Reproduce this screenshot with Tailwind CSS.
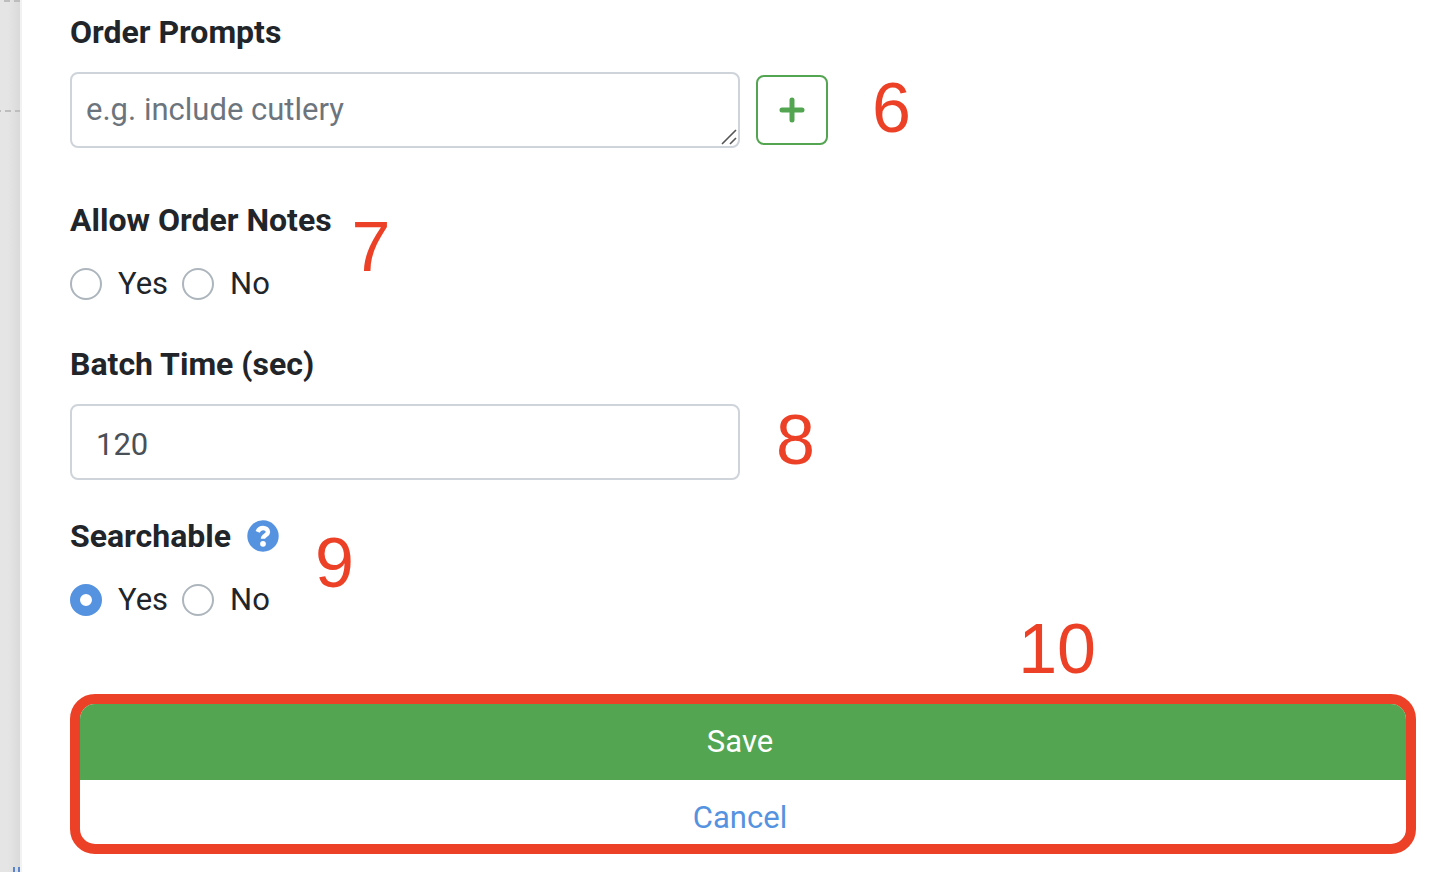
<!DOCTYPE html>
<html lang="en">
<head>
    <meta charset="UTF-8">
    <meta name="viewport" content="width=device-width, initial-scale=1.0">
    <title>Order Settings</title>
    <script src="https://cdn.jsdelivr.net/npm/@tailwindcss/browser@4"></script>
</head>
<body class="flex min-h-screen bg-white font-[Roboto,sans-serif] text-[31px] leading-[48px] text-[#212529]">
    <!-- Page behind the panel -->
    <aside class="relative w-[22px] shrink-0 overflow-hidden border-r-2 border-[#f2f2f2] bg-linear-to-r from-[#e5e5e5] from-40% to-[#dadada]">
        <svg class="absolute left-0 top-0 h-28 w-5" viewBox="0 0 20 112" fill="none" stroke="#bdbdbd" stroke-width="2" aria-hidden="true">
            <path d="M4 1h6M14 1h6M0 111h1M5 111h6M15 111h5"/>
        </svg>
        <svg class="absolute bottom-0 left-0 h-[5px] w-5" viewBox="0 0 20 5" aria-hidden="true">
            <path d="M13 0h2v5h-2zM18 0h2v5h-2z" fill="#5b84cf"/>
        </svg>
    </aside>

    <main class="min-w-0 flex-1 pt-2">
        <form class="pr-8 pl-12">
            <!-- Order prompts -->
            <div class="mb-12">
                <label class="mb-4 block w-fit text-[32px] font-bold" for="prompts">Order Prompts</label>
                <div class="flex items-center gap-4">
                    <div class="relative w-[670px]">
                        <textarea id="prompts" rows="1" placeholder="e.g. include cutlery" class="block h-[76px] w-full resize-none overflow-hidden rounded-lg border-2 border-[#ced4da] px-[14px] py-3 placeholder:text-[#6c757d]"></textarea>
                        <svg class="pointer-events-none absolute right-[3px] bottom-[3px] size-4" viewBox="0 0 16 16" fill="none" stroke="#555" stroke-width="1.6" aria-hidden="true">
                            <path d="M1 15L15 1M9 15L15 9"/>
                        </svg>
                    </div>
                    <button type="button" aria-label="Add prompt" class="flex h-[70px] w-[72px] shrink-0 items-center justify-center rounded-lg border-2 border-[#53a551] text-[#53a551]">
                        <svg class="size-7" viewBox="0 0 28 28" fill="none" stroke="currentColor" aria-hidden="true">
                            <path d="M14 4v20M4 14h20" stroke-width="5" stroke-linecap="round"/>
                            <path d="M14 2.5v23M2.5 14h23" stroke-width="4"/>
                        </svg>
                    </button>
                    <span class="ml-7 pb-1 font-['Liberation_Sans',sans-serif] text-[70px] leading-[70px] text-[#ec4126]">6</span>
                </div>
            </div>

            <!-- Order notes -->
            <fieldset class="relative mb-8 w-fit">
                <legend class="mb-4 text-[32px] font-bold">Allow Order Notes</legend>
                <div class="flex items-center gap-[14px]">
                    <label class="flex items-center gap-4">
                        <input type="radio" name="notes" class="size-8 appearance-none rounded-full border-2 border-[#adb5bd] checked:border-[10px] checked:border-[#5592df]">
                        Yes
                    </label>
                    <label class="flex items-center gap-4">
                        <input type="radio" name="notes" class="size-8 appearance-none rounded-full border-2 border-[#adb5bd] checked:border-[10px] checked:border-[#5592df]">
                        No
                    </label>
                </div>
                <span class="absolute -top-12 left-full ml-5 font-['Liberation_Sans',sans-serif] text-[70px] leading-[70px] text-[#ec4126]">7</span>
            </fieldset>

            <!-- Batch time -->
            <div class="mb-8">
                <label class="mb-4 block w-fit text-[32px] font-bold" for="batch">Batch Time (sec)</label>
                <div class="flex items-center gap-9">
                    <input id="batch" type="text" value="120" class="h-[76px] w-[670px] min-w-0 rounded-lg border-2 border-[#ced4da] px-6 pt-1 text-[#495057]">
                    <span class="pb-1 font-['Liberation_Sans',sans-serif] text-[70px] leading-[70px] text-[#ec4126]">8</span>
                </div>
            </div>

            <!-- Searchable -->
            <fieldset class="relative mb-[70px] w-fit">
                <legend class="mb-4 flex items-center gap-4 text-[32px] font-bold">
                    Searchable
                    <svg class="size-8" viewBox="0 0 32 32" fill="none" role="img" aria-label="Help">
                        <circle cx="16" cy="16" r="15.7" fill="#5592df"/>
                        <path d="M10.6 11.8C11.8 9.2 13.5 8 16 8C18.8 8 21 9.5 21 12C21 15.2 16 15.3 16 18.8" stroke="#fff" stroke-width="4.4"/>
                        <circle cx="16" cy="23.8" r="2.9" fill="#fff"/>
                    </svg>
                </legend>
                <div class="flex items-center gap-[14px]">
                    <label class="flex items-center gap-4">
                        <input type="radio" name="searchable" checked class="size-8 appearance-none rounded-full border-2 border-[#adb5bd] checked:border-[10px] checked:border-[#5592df]">
                        Yes
                    </label>
                    <label class="flex items-center gap-4">
                        <input type="radio" name="searchable" class="size-8 appearance-none rounded-full border-2 border-[#adb5bd] checked:border-[10px] checked:border-[#5592df]">
                        No
                    </label>
                </div>
                <span class="absolute -top-12 left-full ml-9 font-['Liberation_Sans',sans-serif] text-[70px] leading-[70px] text-[#ec4126]">9</span>
            </fieldset>

            <!-- Actions -->
            <div class="relative">
                <div class="overflow-hidden rounded-[25px] border-[10px] border-[#ec4126]">
                    <button type="submit" class="block h-[76px] w-full bg-[#53a551] pr-1.5 text-white">Save</button>
                    <button type="button" class="block h-16 w-full pt-3 pr-1.5 text-[#5592df]">Cancel</button>
                </div>
                <span class="absolute right-80 bottom-full mb-[10px] font-['Liberation_Sans',sans-serif] text-[70px] leading-[70px] text-[#ec4126]">10</span>
            </div>
        </form>
    </main>
</body>
</html>
